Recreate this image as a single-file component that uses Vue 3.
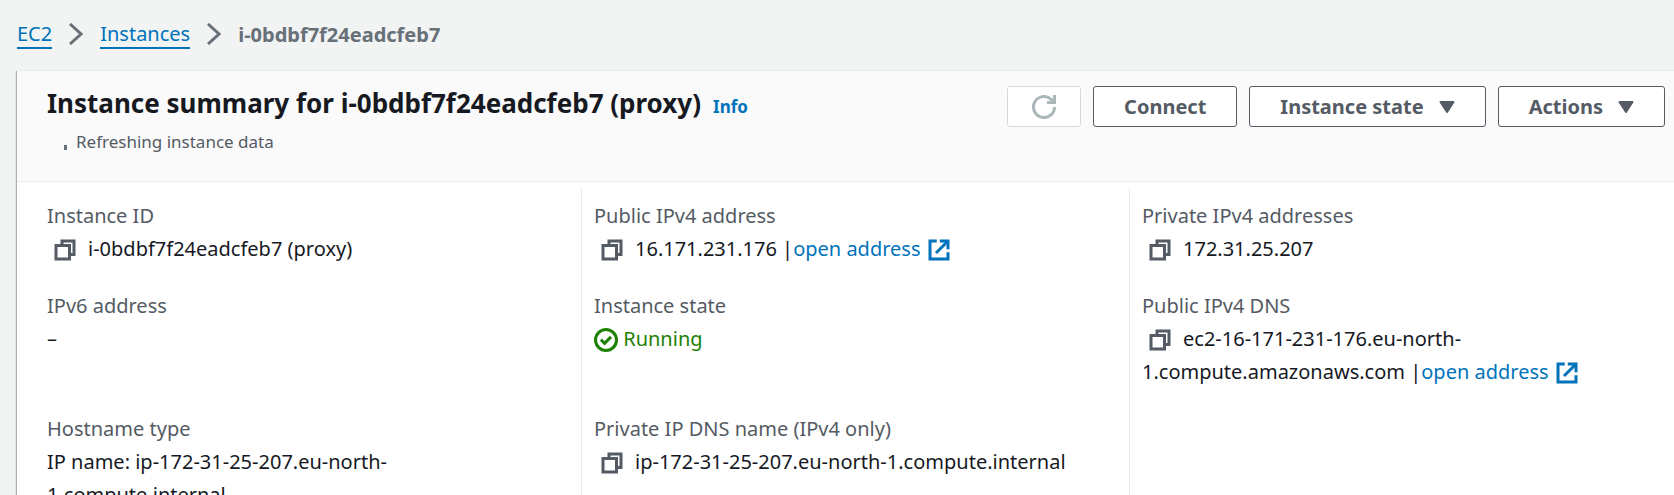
<script setup>
import { h } from 'vue'

const columns = [
  [
    { label: 'Instance ID', copy: true, value: 'i-0bdbf7f24eadcfeb7 (proxy)' },
    { label: 'IPv6 address', value: '–', tall: true },
    { label: 'Hostname type', value: 'IP name: ip-172-31-25-207.eu-north-1.compute.internal' }
  ],
  [
    { label: 'Public IPv4 address', copy: true, value: '16.171.231.176', open: true },
    { label: 'Instance state', status: 'Running', tall: true },
    { label: 'Private IP DNS name (IPv4 only)', copy: true, value: 'ip-172-31-25-207.eu-north-1.compute.internal' }
  ],
  [
    { label: 'Private IPv4 addresses', copy: true, value: '172.31.25.207' },
    { label: 'Public IPv4 DNS', copy: true, value: 'ec2-16-171-231-176.eu-north-1.compute.amazonaws.com', open: true, tall: true }
  ]
]

const Chevron = () =>
  h('svg', { viewBox: '0 0 14 22', width: 14, height: 22, fill: 'none', stroke: 'currentColor', 'stroke-width': 3, 'aria-hidden': 'true' }, [
    h('path', { d: 'M1 1l11 10L1 21' })
  ])

const Caret = () =>
  h('svg', { viewBox: '0 0 16 14', width: 16, height: 14, fill: 'currentColor', stroke: 'currentColor', 'stroke-width': 2, 'stroke-linejoin': 'round', 'aria-hidden': 'true' }, [
    h('path', { d: 'M1.5 2h13L8 12z' })
  ])
</script>

<template>
  <div class="page">
    <nav class="crumbs" aria-label="Breadcrumbs">
      <a href="#ec2">EC2</a>
      <Chevron />
      <a href="#instances">Instances</a>
      <Chevron />
      <span class="current" aria-current="page">i-0bdbf7f24eadcfeb7</span>
    </nav>

    <section class="card">
      <header class="head">
        <div class="heading">
          <div class="title-line">
            <h1>Instance summary for i-0bdbf7f24eadcfeb7 (proxy)</h1>
            <a class="info" href="#info">Info</a>
          </div>
          <p class="refreshing"><span class="spinner"></span>Refreshing instance data</p>
        </div>
        <div class="actions">
          <button class="btn icon-only" type="button" disabled aria-label="Refresh">
            <svg viewBox="0 0 16 16" width="24" height="24" fill="none" stroke="currentColor" stroke-width="2" aria-hidden="true">
              <path d="M15 8a7 7 0 1 1-2.2-5.1L15 5" />
              <path d="M10 5h5V0" />
            </svg>
          </button>
          <button class="btn" type="button">Connect</button>
          <button class="btn" type="button">Instance state <Caret /></button>
          <button class="btn" type="button">Actions <Caret /></button>
        </div>
      </header>

      <div class="columns">
        <dl v-for="(column, i) in columns" :key="i" class="column">
          <div v-for="field in column" :key="field.label" class="field" :class="{ tall: field.tall }">
            <dt>{{ field.label }}</dt>
            <dd>
              <button v-if="field.copy" class="copy" type="button" :aria-label="'Copy ' + field.label">
                <svg viewBox="0 0 16 16" width="24" height="24" fill="none" stroke="currentColor" stroke-width="2" aria-hidden="true">
                  <path d="M2 5h9v9H2z" />
                  <path d="M6 5V2h8v9h-3" />
                </svg>
              </button>
              <span v-if="field.status" class="status">
                <svg viewBox="0 0 16 16" width="24" height="24" fill="none" stroke="currentColor" stroke-width="2" aria-hidden="true">
                  <circle cx="8" cy="8" r="7" />
                  <path d="M4.6 7.8l2.5 2.4 4.2-4.3" />
                </svg>
                {{ field.status }}
              </span>
              <template v-else>{{ field.value }}</template>
              <template v-if="field.open"> |<a class="open" href="#open">open address<svg viewBox="0 0 16 16" width="24" height="24" fill="none" stroke="currentColor" stroke-width="2" aria-hidden="true">
                <path d="M6.5 2H2v12h12V9.5" />
                <path d="M8.5 2H14v5.5" />
                <path d="M6 10l8-8" />
              </svg></a></template>
            </dd>
          </div>
        </dl>
      </div>
    </section>
  </div>
</template>

<style>
body {
  background: #f2f3f3;
}
</style>

<style scoped>
.page {
  box-sizing: border-box;
  height: 100vh;
  overflow: hidden;
  padding-left: 17px;
  background: #f2f3f3;
  color: #16191f;
  font-family: "Noto Sans", "Open Sans", sans-serif;
  font-size: 20px;
  line-height: 33px;
}
a {
  color: #0073bb;
  text-decoration: none;
}
.crumbs {
  display: flex;
  align-items: center;
  height: 68px;
  padding-bottom: 2px;
  gap: 17px;
  color: #687078;
}
.crumbs a {
  padding-top: 2px;
  border-bottom: 2px solid #0073bb;
  line-height: 26px;
}
.current {
  font-weight: 700;
}
.card {
  margin-right: -21px;
  border-top: 1px solid #eaeded;
  background: #fff;
  box-shadow: -1px 1px 1px rgba(0, 28, 36, 0.3);
}
.head {
  display: flex;
  justify-content: space-between;
  align-items: flex-start;
  padding: 14px 30px 24px;
  background: #fafafa;
  border-bottom: 1px solid #eaeded;
}
.title-line {
  display: flex;
  align-items: baseline;
  gap: 12px;
}
h1 {
  margin: 0;
  font-size: 26px;
  font-weight: 700;
  line-height: 36px;
}
.info {
  font-size: 17px;
  font-weight: 700;
}
.refreshing {
  display: flex;
  align-items: center;
  margin: 4px 0 0;
  font-size: 17px;
  line-height: 30px;
  color: #545b64;
}
.spinner {
  width: 3px;
  height: 5px;
  margin: 10px 9px 0 17px;
  background: #687078;
}
.actions {
  display: flex;
  gap: 12px;
  padding-top: 1px;
}
.btn {
  display: flex;
  align-items: center;
  gap: 15px;
  height: 41px;
  padding: 0 30px;
  border: 1px solid #545b64;
  border-radius: 3px;
  background: #fff;
  color: #545b64;
  font: 700 20px/30px "Noto Sans", "Open Sans", sans-serif;
  white-space: nowrap;
}
.icon-only {
  padding: 0 24px;
  border-color: #d5dbdb;
  color: #aab7b8;
}
.columns {
  display: grid;
  grid-template-columns: repeat(3, 1fr);
  padding: 6px 18px 30px 16px;
}
.column {
  margin: 0;
  padding: 11px 60px 0 14px;
}
.column + .column {
  border-left: 1px solid #eaeded;
  padding-left: 12px;
  padding-right: 12px;
}
.column:last-child {
  padding-right: 90px;
}
.field {
  padding-bottom: 24px;
}
.tall {
  min-height: 99px;
}
dt {
  color: #545b64;
}
dd {
  margin: 0;
}
dd svg {
  display: inline-block;
  vertical-align: -6px;
}
.copy {
  margin: 0 11px 0 6px;
  padding: 0;
  border: 0;
  background: none;
  color: #545b64;
  font: inherit;
}
.status {
  color: #1d8102;
}
.open svg {
  margin-left: 6px;
}
</style>
